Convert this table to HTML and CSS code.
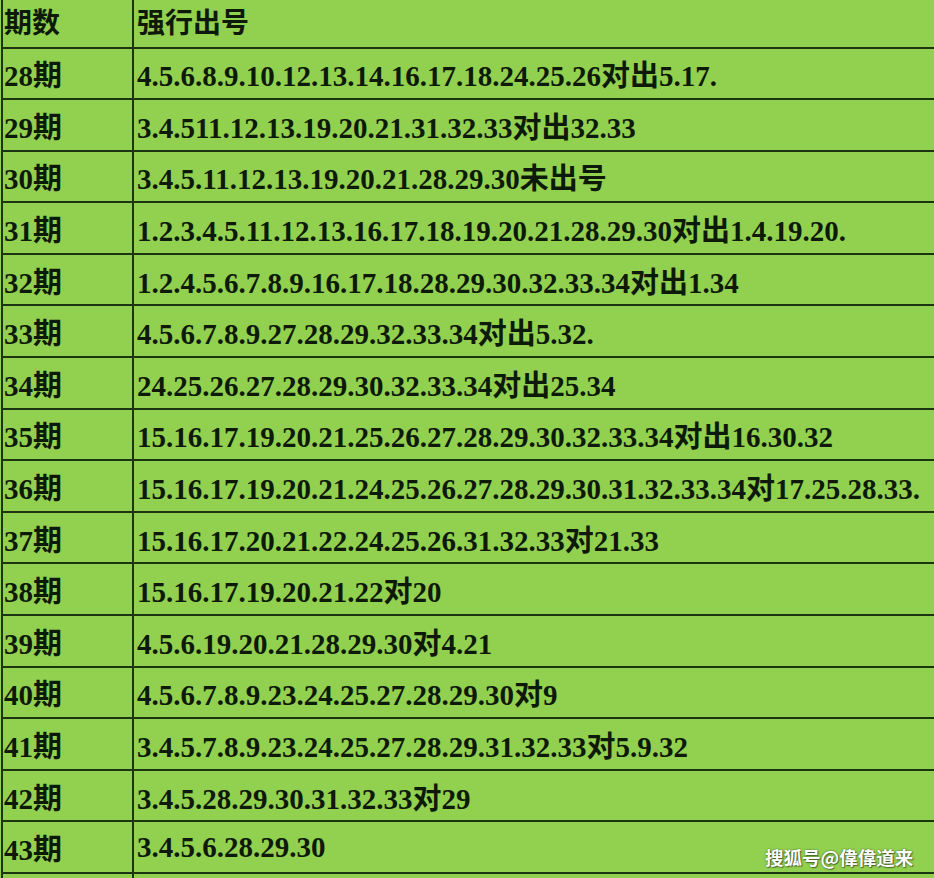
FILE: index.html
```html
<!DOCTYPE html>
<html lang="zh">
<head>
<meta charset="utf-8">
<link rel="stylesheet" href="styles.css">
</head>
<body>
<div class="sheet">
  <div class="table">
    <div class="row head"><div class="c1">期数</div><div class="c2">强行出号</div></div>
    <div class="row"><div class="c1">28期</div><div class="c2">4.5.6.8.9.10.12.13.14.16.17.18.24.25.26对出5.17.</div></div>
    <div class="row"><div class="c1">29期</div><div class="c2">3.4.511.12.13.19.20.21.31.32.33对出32.33</div></div>
    <div class="row"><div class="c1">30期</div><div class="c2">3.4.5.11.12.13.19.20.21.28.29.30未出号</div></div>
    <div class="row"><div class="c1">31期</div><div class="c2">1.2.3.4.5.11.12.13.16.17.18.19.20.21.28.29.30对出1.4.19.20.</div></div>
    <div class="row"><div class="c1">32期</div><div class="c2">1.2.4.5.6.7.8.9.16.17.18.28.29.30.32.33.34对出1.34</div></div>
    <div class="row"><div class="c1">33期</div><div class="c2">4.5.6.7.8.9.27.28.29.32.33.34对出5.32.</div></div>
    <div class="row"><div class="c1">34期</div><div class="c2">24.25.26.27.28.29.30.32.33.34对出25.34</div></div>
    <div class="row"><div class="c1">35期</div><div class="c2">15.16.17.19.20.21.25.26.27.28.29.30.32.33.34对出16.30.32</div></div>
    <div class="row"><div class="c1">36期</div><div class="c2">15.16.17.19.20.21.24.25.26.27.28.29.30.31.32.33.34对17.25.28.33.</div></div>
    <div class="row"><div class="c1">37期</div><div class="c2">15.16.17.20.21.22.24.25.26.31.32.33对21.33</div></div>
    <div class="row"><div class="c1">38期</div><div class="c2">15.16.17.19.20.21.22对20</div></div>
    <div class="row"><div class="c1">39期</div><div class="c2">4.5.6.19.20.21.28.29.30对4.21</div></div>
    <div class="row"><div class="c1">40期</div><div class="c2">4.5.6.7.8.9.23.24.25.27.28.29.30对9</div></div>
    <div class="row"><div class="c1">41期</div><div class="c2">3.4.5.7.8.9.23.24.25.27.28.29.31.32.33对5.9.32</div></div>
    <div class="row"><div class="c1">42期</div><div class="c2">3.4.5.28.29.30.31.32.33对29</div></div>
    <div class="row"><div class="c1">43期</div><div class="c2">3.4.5.6.28.29.30</div></div>
    <div class="row"><div class="c1"></div><div class="c2"></div></div>
  </div>
  <div class="watermark">搜狐号@偉偉道来</div>
</div>
</body>
</html>
```

FILE: styles.css
```css
html, body {
  margin: 0;
  padding: 0;
  background: #92d050;
}
.sheet {
  position: relative;
  width: 934px;
  height: 878px;
  overflow: hidden;
  background: #92d050;
}
.table {
  margin-left: 1px;
  border-left: 2px solid #1c3410;
  font-family: "Liberation Serif", "Noto Sans CJK SC", serif;
  font-weight: 700;
  font-size: 29px;
  color: #0e1a08;
}
.row {
  display: grid;
  grid-template-columns: 131px 1fr;
  height: 51.6px;
  box-sizing: border-box;
  border-bottom: 2px solid #1c3410;
}
.row.head {
  height: 48.5px;
  font-family: "Noto Sans CJK SC", sans-serif;
  font-size: 28px;
}
.c1, .c2 {
  display: flex;
  align-items: center;
  white-space: nowrap;
  overflow: hidden;
}
.c1 {
  padding-left: 1px;
  border-right: 2px solid #1c3410;
}
.c2 {
  padding-left: 3px;
}
.row.head .c1, .row.head .c2 {
  padding-bottom: 4px;
}
.watermark {
  position: absolute;
  left: 765px;
  top: 844px;
  font-family: "Noto Sans CJK SC", sans-serif;
  font-weight: 700;
  font-size: 18.5px;
  color: #ffffff;
  text-shadow: 0 0 2px rgba(0,0,0,0.55), 1px 1px 1px rgba(0,0,0,0.4);
  white-space: nowrap;
}
```
